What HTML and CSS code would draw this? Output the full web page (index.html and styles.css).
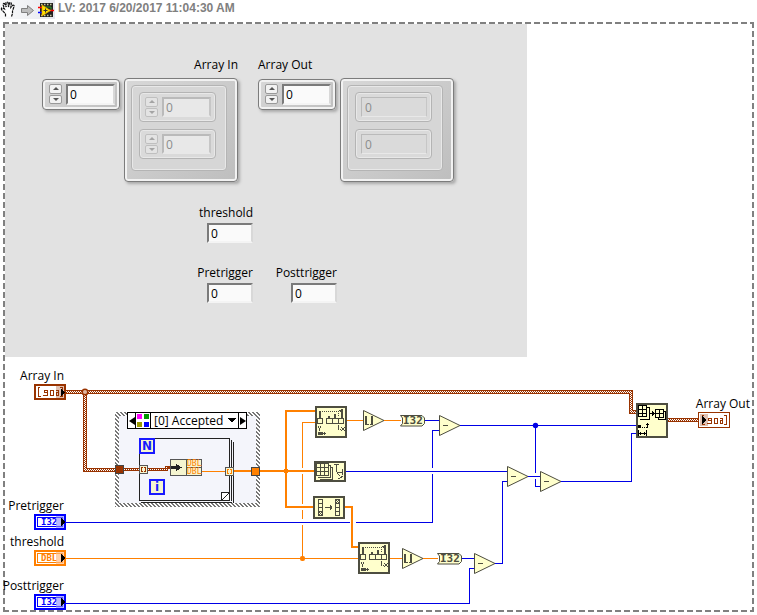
FILE: index.html
```html
<!DOCTYPE html>
<html lang="en">
<head>
<meta charset="utf-8">
<title>LabVIEW snippet</title>
<link rel="stylesheet" href="styles.css">
</head>
<body>
<header class="bar">
  <div class="tools">
    <svg class="tool-icons" width="55" height="19" viewBox="0 0 55 19" aria-hidden="true">
      <path d="M5.500 16.500V14L1.500 9.500Q1 8 2.500 7.800L4.500 9L3 4.500Q3.300 3 4.500 3.500L6.200 7L6 2.500Q7 1.500 8 2.500L8.500 7L9.500 3Q10.500 2 11.300 3.300L10.800 7.500L13 5Q14.500 5 14 6.500L12.500 11V13.500L11.500 16.500" fill="#fff" stroke="#111" stroke-width="1.200" stroke-dasharray="3 .6"/>
      <path d="M21.500 8.500h6v-3l6 5-6 5v-3h-6z" fill="#bdbdbd" stroke="#808080" stroke-width="1"/>
      <rect x="40" y="3" width="13" height="14" fill="#222"/>
      <path d="M41 4.500h12M41 15.500h12" stroke="#c8c8a0" stroke-width="1.500" stroke-dasharray="1.500 1.500"/>
      <path d="M44 7h7v3" fill="none" stroke="#2a9a2a" stroke-width="1"/>
      <path d="M38 7.500h4M49 10.500h5" stroke="#f00" stroke-width="1.500"/>
      <path d="M38 12.500h4" stroke="#00f" stroke-width="1.500"/>
      <path d="M42 5l8.500 5.500-8.500 5.500z" fill="#ffe000" stroke="#e0a000" stroke-width=".7"/>
      <path d="M43.500 10.500h4M45.500 8.500v4" stroke="#333" stroke-width="1"/>
    </svg>
  </div>
  <h1 class="title">LV: 2017 6/20/2017 11:04:30 AM</h1>
</header>

<main class="frame">
  <section class="panel" aria-label="Front panel">
    <div class="arrays">
      <div class="array array-in">
        <label class="caption" for="in-index">Array In</label>
        <div class="array-body">
          <div class="bevel index">
            <div class="spin"><button type="button" class="up" aria-label="Increase"></button><button type="button" class="down" aria-label="Decrease"></button></div>
            <input class="num" id="in-index" value="0">
          </div>
          <div class="bevel shell">
            <div class="well">
              <div class="cell">
                <div class="spin"><button type="button" class="up" aria-label="Increase"></button><button type="button" class="down" aria-label="Decrease"></button></div>
                <input class="num" value="0" aria-label="First value">
              </div>
              <div class="cell">
                <div class="spin"><button type="button" class="up" aria-label="Increase"></button><button type="button" class="down" aria-label="Decrease"></button></div>
                <input class="num" value="0" aria-label="Second value">
              </div>
            </div>
          </div>
        </div>
      </div>
      <div class="array">
        <label class="caption" for="out-index">Array Out</label>
        <div class="array-body">
          <div class="bevel index">
            <div class="spin"><button type="button" class="up" aria-label="Increase"></button><button type="button" class="down" aria-label="Decrease"></button></div>
            <input class="num" id="out-index" value="0">
          </div>
          <div class="bevel shell">
            <div class="well">
              <div class="cell"><input class="num readout" value="0" readonly aria-label="First output"></div>
              <div class="cell"><input class="num readout" value="0" readonly aria-label="Second output"></div>
            </div>
          </div>
        </div>
      </div>
    </div>
    <div class="fields">
      <div class="field first"><label for="threshold">threshold</label><input class="num plain" id="threshold" value="0"></div>
      <div class="field"><label for="pre">Pretrigger</label><input class="num plain" id="pre" value="0"></div>
      <div class="field"><label for="post">Posttrigger</label><input class="num plain" id="post" value="0"></div>
    </div>
  </section>

  <section class="diagram" aria-label="Block diagram">
    <svg class="canvas" width="747" height="253" viewBox="5 357 747 253">
      <defs>
        <pattern id="weave" width="2" height="2" patternUnits="userSpaceOnUse">
          <rect width="2" height="2" fill="#fff"/><path d="M0 0h1v1h1v1h-1v-1h-1z" fill="#993300"/>
        </pattern>
        <pattern id="hatch" width="4" height="4" patternUnits="userSpaceOnUse">
          <rect width="4" height="4" fill="#fff"/><path d="M0 0h2v1h-2zM1 1h2v1h-2zM2 2h2v1h-2zM0 3h1v1h-1zM3 3h1v1h-1z" fill="#777"/>
        </pattern>
        <g id="subtract">
          <path d="M.5.5V20.500L21 10.500z" class="node thin"/>
          <path d="M4 10.500h5" class="ink" shape-rendering="crispEdges"/>
        </g>
        <g id="round">
          <path d="M.5.5V20.500L21 10.500z" class="node thin"/>
          <path d="M3 6V15M9 6V15" class="ink bold" shape-rendering="crispEdges"/><path d="M4 14.500h1.500M7 14.500h1" class="ink" shape-rendering="crispEdges"/>
        </g>
        <g id="convert">
          <path d="M.5.5H22L24.500 3V8.500L22 11H.5L2.500 8.500V3z" class="node thin"/>
          <text x="3" y="9" class="type-dark">I32</text>
        </g>
        <g id="search" shape-rendering="crispEdges">
          <rect x="1" y="1" width="30" height="30" class="node"/>
          <path d="M2.500 12.500h5v5h-5zM11.500 12.500h6v5h-6zM17.500 12.500h6v5h-6zM23.500 12.500h5v5h-5z" class="ink"/>
          <path d="M5 5v7M14 10v2M20 8v4M27 3v9" class="ink bold"/>
          <path d="M7 5.500h17M23.500 7v4" class="ink" stroke-dasharray="1 1"/>
          <path d="M24 4.500h2M25 5.500h1" class="ink"/>
          <path d="M3.500 20v2M5.500 20v2M4.500 22v3M23.500 19v5M25 23.500h1M26 21.500h1M29 21.500h1M27 22.500h2M27 23.500h2M26 24.500h1M29 24.500h1" class="ink"/>
          <path d="M3 26h5v3h-5z" fill="#4d4d40"/><path d="M8 27.500h3M9.500 26v3" class="ink"/>
        </g>
        <g id="cluster" shape-rendering="crispEdges" fill="none" stroke="#993300">
          <path d="M3 .5H1.500V9.500H4M7 3.500h4M7.500 3v3M7 5.500h4M10.500 3v5M6 8.500h5M13.500 3v6M13 3.500h4M16.500 3v6M13 8.500h4M19 3.500h3M21.500 3v6M19 5.500h3M19.500 5v4M19 8.500h3M23 .5H25.500V9.500H23"/>
        </g>
      </defs>

      <!-- case structure and loop -->
      <g shape-rendering="crispEdges">
        <rect x="115" y="412" width="145" height="95" fill="url(#hatch)"/>
        <rect x="119" y="416" width="137" height="87" fill="#f4f5fb"/>
        <path d="M233.500 442V502.500M141 502.500H232M231.500 440V501" stroke="#222" fill="none"/>
        <path d="M139.500 438.500H229.500V492L221 500.500H139.500z" fill="#f4f5fb" stroke="#222"/>
        <path d="M221.500 500V492.500H229V500.500H221M222 500L229 493" fill="#fff" stroke="#222"/>
      </g>

      <!-- single-value wires -->
      <g fill="none" shape-rendering="crispEdges" stroke-width="1">
        <path class="orange" d="M66 558.500H358M302.500 558V422.500H315M347 420.500H363M384 420.500H401M390 558.500H402M423 558.500H438M202 471.500H226"/>
        <path class="halo" d="M302.500 468V474M302.500 504V510M302.500 519V525"/>
        <path class="blue" d="M66 522.500H432.500V430.500H439M425 420.500H439M460 425.500H636M535.500 425V486.500H540"/>
        <path class="halo" d="M432.500 468V474M535.500 473V479M350 522.500H356"/>
        <path class="blue" d="M346 471.500H507M528 476.500H540M561 481.500H631.500V433.500H636M507 481.500H502.500V563.500H495M66 603.500H469.500V568.500H474M462 558.500H474"/>
      </g>

      <!-- array wires -->
      <g fill="none" shape-rendering="crispEdges" stroke="#ff8000" stroke-width="2">
        <path d="M260 471H314M315 411H286V507H313M345 507H352V547H358M234 471H251"/>
        <path d="M284 471H288" stroke-width="4"/>
      </g>
      <rect x="300" y="556" width="5" height="5" rx="2" fill="#ff8000"/>
      <circle cx="535.500" cy="425.500" r="2.700" fill="#0000e6"/>

      <g fill="none" shape-rendering="crispEdges">
        <path d="M66 392H631V412H636M85 392V470H116M668 420H698" stroke="#993300" stroke-width="4"/>
        <path d="M66 392H631V412H636M85 392V470H116M668 420H698" stroke="url(#weave)" stroke-width="2"/>
        <path d="M124 469.500H166V467.500H170" stroke="#993300" stroke-width="3"/>
        <path d="M124 469.500H166V467.500H168" stroke="url(#weave)" stroke-width="1"/>
      </g>
      <circle cx="85" cy="392" r="2.800" fill="#e0b8a0" stroke="#993300" stroke-width="1.500"/>

      <!-- tunnels and loop parts -->
      <g shape-rendering="crispEdges">
        <rect x="115.500" y="465.500" width="8" height="8" fill="#993300" stroke="#444"/>
        <rect x="251.500" y="467.500" width="8" height="8" fill="#ff8000" stroke="#444"/>
        <rect x="139.500" y="465.500" width="8" height="8" fill="#f5f5d0" stroke="#555"/>
        <path d="M143 467.500H141.500V471.500H143M144 467.500H145.500V471.500H144" fill="none" stroke="#993300"/>
        <rect x="225.500" y="467.500" width="8" height="8" fill="#f5f5d0" stroke="#555"/>
        <path d="M229 469.500H227.500V473.500H229M230 469.500H231.500V473.500H230" fill="none" stroke="#ff8000"/>
        <rect x="170.500" y="459.500" width="31" height="16" fill="#f5f5d0" stroke="#555"/>
        <path d="M186.500 459V476M187 467.500H202" stroke="#555"/>
        <path d="M171 467.500H178" stroke="#222" stroke-width="3"/><path d="M176 463.500L181.500 467.500L176 471.500z" fill="#222"/>
        <rect x="140" y="439" width="14" height="14" fill="#f5f5d0" stroke="#1a1aff" stroke-width="2"/>
        <rect x="150" y="480" width="14" height="14" fill="#f5f5d0" stroke="#1a1aff" stroke-width="2"/>
      </g>
      <text x="187" y="466" class="type-small">DBL</text>
      <text x="187" y="474" class="type-small">DBL</text>
      <text x="147" y="450" class="loop">N</text>
      <text x="157" y="491" class="loop">i</text>

      <!-- function nodes -->
      <use href="#search" x="315" y="406"/>
      <use href="#search" x="358" y="542"/>
      <use href="#round" x="363" y="410"/>
      <use href="#round" x="402" y="548"/>
      <use href="#convert" x="400" y="415"/>
      <use href="#convert" x="437" y="553"/>
      <use href="#subtract" x="439" y="415"/>
      <use href="#subtract" x="507" y="466"/>
      <use href="#subtract" x="540" y="471"/>
      <use href="#subtract" x="474" y="553"/>

      <g shape-rendering="crispEdges">
        <rect x="315" y="462" width="30" height="19" class="node"/>
        <path d="M328 465.500H330.500V477.500H318M330 467.500H332.500V479.500H320" class="ink"/>
        <path d="M316.500 463.500H328.500V475.500H316.500zM320.500 463V476M324.500 463V476M316 467.500H329M316 471.500H329" fill="#ffffcc" class="ink"/>
        <path d="M334 464.500H339M336.500 464V472M337 472.500H342M342.500 469V475M337 473.500H338M338 474.500H339M339 475.500H340M340 477.500H342M341 476.500H343M338 478.500H340" class="ink"/>
      </g>

      <g shape-rendering="crispEdges">
        <rect x="314" y="497" width="30" height="21" class="node"/>
        <path d="M318.500 499.500H322.500V515.500H318.500zM318 503.500H323M318 507.500H323M318 511.500H323M335.500 499.500H339.500V515.500H335.500zM335 503.500H340M335 507.500H340M335 511.500H340" fill="#ffffcc" class="ink"/>
        <path d="M319 512.500h1m1 0h1M320 513.500h1M319 514.500h1m1 0h1M336 500.500h1m1 0h1M337 501.500h1M336 502.500h1m1 0h1" class="ink"/>
        <path d="M325 507.500H332M330.500 505V510M331.500 506V509" class="ink"/>
      </g>

      <g shape-rendering="crispEdges">
        <rect x="637" y="404" width="30" height="33" class="node"/>
        <path d="M647 407.500H649.500V419.500H640" class="ink black"/>
        <path d="M638.500 405.500H646.500V416.500H638.500zM642.500 405V417M638 409.500H647M638 413.500H647" class="ink black"/>
        <path d="M650 413.500H655M652.500 411V416M653.500 412V415" class="ink black"/>
        <path d="M664 411.500H665.500V419.500H658V417" class="ink black"/>
        <path d="M655.500 409.500H663.500V417.500H655.500zM659.500 409V418M655 413.500H664" class="ink black"/>
        <path d="M638 425h3v3h-3z"/>
        <path d="M642 427.500h1m1 0h1m1 0h2M647.500 423V427M646 424.500H649M638.500 430V436M646.500 430V436M639 433.500H646M640.500 432V435M644.500 432V435" class="ink black"/>
      </g>

      <!-- terminals -->
      <g shape-rendering="crispEdges">
        <rect x="35" y="385" width="30" height="14" fill="#fff" stroke="#993300" stroke-width="2"/>
        <use href="#cluster" x="37" y="387"/>
        <rect x="56" y="386" width="8" height="12" fill="#993300" opacity=".3"/>
        <path d="M61 389L65 392L61 396z"/>
        <rect x="698.500" y="412.500" width="31" height="15" fill="#fff" stroke="#993300"/>
        <use href="#cluster" x="701" y="415"/>
        <rect x="700" y="414" width="8" height="12" fill="#993300" opacity=".3"/>
        <path d="M702 416L706 420L702 424z"/>
      </g>
      <g shape-rendering="crispEdges" fill="#fff">
        <rect x="35" y="515" width="30" height="14" stroke="#0000ff" stroke-width="2"/>
        <rect x="37.500" y="517.500" width="25" height="9" stroke="#0000ff"/>
        <rect x="35" y="551" width="30" height="14" stroke="#ff8000" stroke-width="2"/>
        <rect x="37.500" y="553.500" width="25" height="9" stroke="#ff8000"/>
        <rect x="35" y="595" width="30" height="14" stroke="#0000ff" stroke-width="2"/>
        <rect x="37.500" y="597.500" width="25" height="9" stroke="#0000ff"/>
      </g>
      <text x="41" y="525" class="type-blue">I32</text>
      <text x="41" y="561" class="type-orange">DBL</text>
      <text x="41" y="605" class="type-blue">I32</text>
      <g shape-rendering="crispEdges">
        <path d="M56 516H64V528H56zM56 596H64V608H56z" fill="#8888ff" opacity=".6"/>
        <path d="M56 552H64V564H56z" fill="#ffb880" opacity=".65"/>
        <path d="M61 518L65 522L61 526zM61 554L65 558L61 562zM61 598L65 602L61 606z"/>
      </g>

      <g class="labels">
        <text x="64" y="380">Array In</text>
        <text x="64" y="510">Pretrigger</text>
        <text x="64" y="546">threshold</text>
        <text x="64" y="590">Posttrigger</text>
        <text x="750" y="408">Array Out</text>
      </g>
    </svg>

    <div class="selector">
      <button type="button" class="step prev" aria-label="Previous case"></button>
      <span class="swatches" aria-hidden="true"><i class="pink"></i><i class="green"></i><i class="olive"></i><i class="navy"></i></span>
      <select class="case" aria-label="Case"><option>[0] Accepted</option></select>
      <button type="button" class="step next" aria-label="Next case"></button>
    </div>
  </section>
</main>
</body>
</html>
```
FILE: styles.css
```css
* { box-sizing: border-box; }

body {
  margin: 0;
  background: #fff;
  color: #000;
  font: 12px/16px "Open Sans", "Noto Sans", sans-serif;
}

button, input, select { font: inherit; color: inherit; margin: 0; }

.bar { display: flex; height: 22px; }
.tools { width: 55px; height: 19px; background: linear-gradient(90deg, #fafafa, #e6e8ee); }
.tool-icons { display: block; }
.title {
  margin: 0 0 0 3px;
  font: bold 12px/16px "Liberation Sans", Arial, sans-serif;
  color: #808080;
}

/* marching-dash outline round both halves */
.frame {
  margin: 0 3px 3px;
  padding: 2px;
  background:
    repeating-linear-gradient(90deg, #808080 0 6px, transparent 6px 9px) 0 0 / 100% 2px no-repeat,
    repeating-linear-gradient(90deg, #808080 0 6px, transparent 6px 9px) 0 100% / 100% 2px no-repeat,
    repeating-linear-gradient(180deg, #808080 0 6px, transparent 6px 9px) 0 0 / 2px 100% no-repeat,
    repeating-linear-gradient(180deg, #808080 0 6px, transparent 6px 9px) 100% 0 / 2px 100% no-repeat;
}

.panel {
  width: 70%;
  max-width: 522px;
  padding: 33px 0 54px 37px;
  background: #e2e2e2;
}

.arrays { display: flex; gap: 20px; }
.caption { display: block; margin-bottom: 5px; }
.array-in .caption { text-align: right; }
.array-body { display: flex; align-items: flex-start; gap: 4px; }

.bevel {
  border: 1px solid #7c7c7c;
  border-radius: 4px;
  background: linear-gradient(135deg, #d8d8d8, #bebebe);
  box-shadow: inset 0 0 0 2px #f2f2f2, 2px 2px 3px #aaa;
}
.index { display: flex; gap: 4px; width: 78px; margin-top: 1px; padding: 4px 4px 4px 6px; }
.shell { width: 114px; padding: 6px 10px 10px 6px; }
.well, .cell {
  border: 1px solid #b4b4b4;
  border-radius: 4px;
  box-shadow: inset 0 0 0 1px #e8e8e8;
  background: #d6d6d6;
}
.well { display: grid; grid-template-columns: minmax(0, 1fr); gap: 7px; padding: 6px 10px 11px 7px; }
.cell { display: flex; gap: 4px; padding: 4px 4px 4px 5px; background: #dadada; }
.cell .spin { opacity: .4; }

.num {
  flex: 1;
  min-width: 0;
  height: 21px;
  padding: 0 2px;
  border: 2px solid;
  border-color: #7a7a7a #d8d8d8 #f4f4f4 #7a7a7a;
  background: #fafafa;
  outline: 0;
}
.cell .num { height: 20px; background: #e8e8e8; color: #8c8c8c; border-color: #bababa #c6c6c6 #e8e8e8 #bababa; }
.cell .readout { background: #dadada; border-width: 1px; padding-left: 3px; }

.spin { display: grid; width: 13px; height: 20px; gap: 1px; }
.spin button {
  display: grid;
  place-items: center;
  padding: 0;
  border: 1px solid #999;
  border-radius: 2px;
  background: #f2f2f2;
}
.spin button::before { content: ""; border: 3px solid transparent; }
.spin .up::before { border-bottom-color: #555; border-top: 0; }
.spin .down::before { border-top-color: #555; border-bottom: 0; }

.fields {
  display: grid;
  grid-template-columns: 53px 59px;
  gap: 22px 25px;
  margin: 23px 0 0 158px;
}
.field { display: flex; flex-direction: column; align-items: flex-end; gap: 2px; white-space: nowrap; }
.first { grid-column: 1 / -1; width: 53px; }
.plain { flex: none; width: 46px; height: 20px; }

.diagram { position: relative; }
.canvas { display: block; overflow: visible; }
.labels { text-anchor: end; font-size: 12px; }
.node { fill: #ffffcc; stroke: #4d4d40; stroke-width: 2; }
.node.thin { stroke-width: 1; }
.ink { stroke: #4d4d40; stroke-width: 1; }
.ink:not([fill]) { fill: none; }
.ink.bold { stroke-width: 2; }
.ink.black { stroke: #000; }
.orange { stroke: #ff8000; }
.blue { stroke: #0000e6; }
.halo { stroke: #fff; stroke-width: 3; }

.type-dark, .type-blue, .type-orange { font-family: "DejaVu Sans Mono", monospace; font-weight: bold; }
.type-dark { font-size: 11px; fill: #4d4d40; }
.type-blue { font-size: 9px; fill: #0000ff; }
.type-orange { font-size: 9px; fill: #ff8000; }
.type-small { font: 8px "DejaVu Sans Mono", monospace; fill: #ff8000; }
.loop { font: bold 12px "DejaVu Sans", sans-serif; fill: #1a1aff; text-anchor: middle; }

/* case chooser laid over the structure's top edge */
.selector {
  position: absolute;
  left: 122px;
  top: 55px;
  display: flex;
  width: 120px;
  height: 17px;
  border: 1px solid #000;
  background: #fff;
}
.step { width: 7px; padding: 0; border: 0; background: #fff; display: grid; place-items: center; }
.step::before { content: ""; border: 4px solid transparent; }
.prev::before { border-left: 0; border-right: 6px solid #000; }
.next::before { border-right: 0; border-left: 6px solid #000; }
.swatches {
  display: grid;
  grid-template-columns: 5px 5px;
  gap: 2px;
  padding: 1px;
  border: solid #000;
  border-width: 0 1px;
}
.swatches i { height: 5px; }
.pink { background: #f0f; }
.green { background: #090; }
.olive { background: #990; }
.navy { background: #00f; }
.case {
  flex: 1;
  min-width: 0;
  height: 15px;
  padding: 0 0 0 3px;
  border: 0;
  border-right: 1px solid #000;
  border-radius: 0;
  appearance: none;
  line-height: 15px;
  background:
    linear-gradient(45deg, transparent 50%, #000 50%) calc(100% - 6px) 5px / 4px 4px no-repeat,
    linear-gradient(-45deg, transparent 50%, #000 50%) calc(100% - 2px) 5px / 4px 4px no-repeat,
    #fff;
}
```
